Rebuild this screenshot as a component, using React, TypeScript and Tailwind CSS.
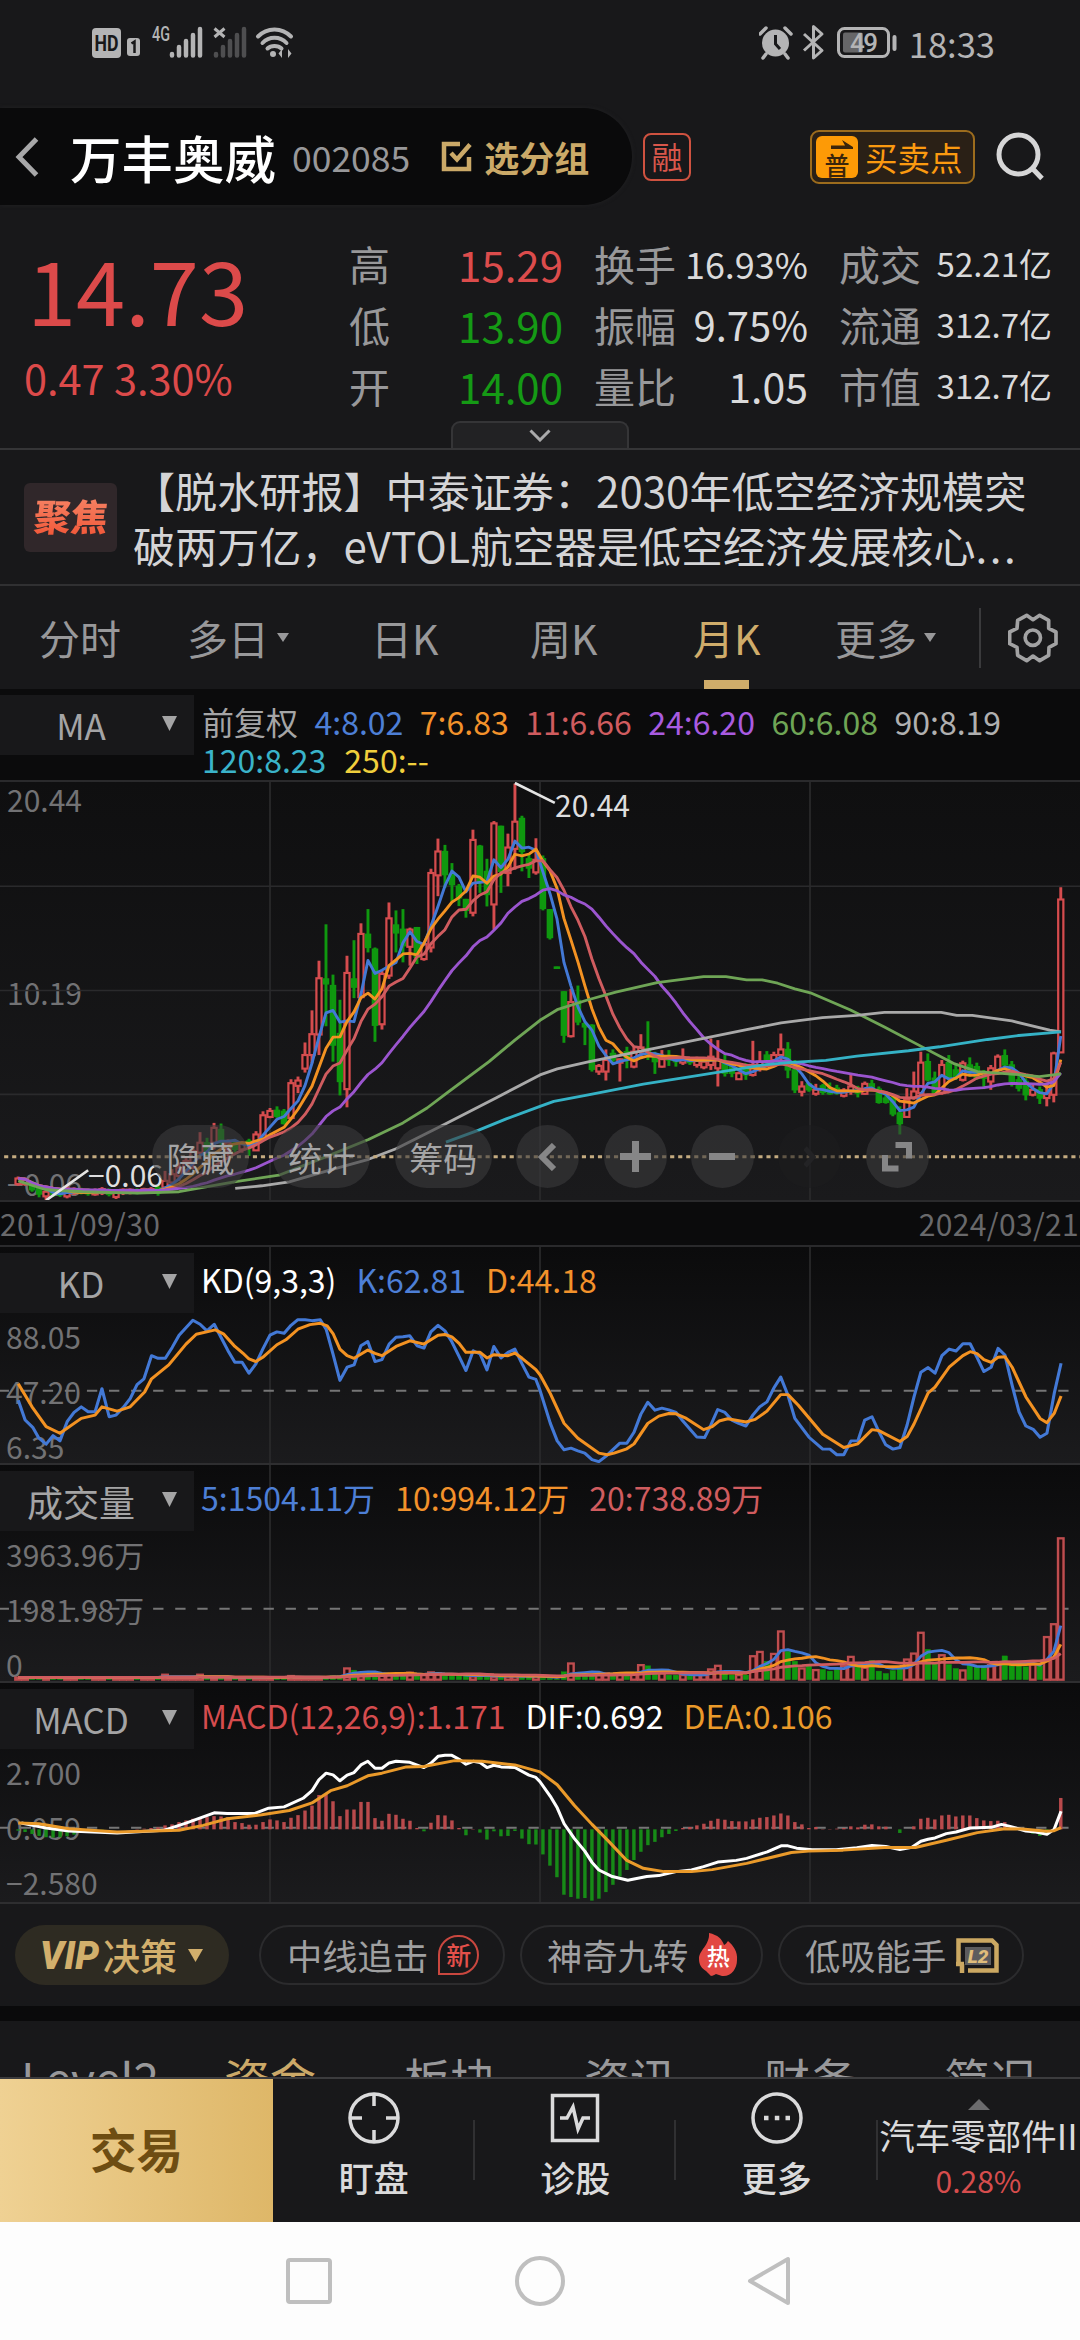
import React from "react";

type Pt = [number, number];

const X0 = 52.5;
const STEP = 20.32;
const xAt = (i: number) => X0 + STEP * i;

const BLUE = "#4379d6";
const ORANGE = "#f39222";
const ROSE = "#d05c5f";
const RED = "#d54c4e";
const GREEN = "#0f980f";

// Monthly candles: direction, high, body top, body bottom, low (chart units).
const CANDLES = `
R1222,1228,1245,1250 R1225,1232,1245,1250 G1235,1240,1262,1268 G1250,1258,1275,1285 R1262,1268,1282,1293
G1258,1264,1276,1284 G1255,1262,1278,1284 R1250,1262,1282,1288 R1255,1262,1272,1278 G1256,1262,1272,1276
G1258,1264,1274,1280 R1258,1264,1276,1280 R1254,1260,1272,1278 G1258,1262,1276,1282 R1262,1268,1284,1290
R1258,1262,1272,1278 R1258,1262,1270,1276 G1258,1262,1270,1276 R1256,1260,1268,1272 R1254,1260,1268,1272
G1250,1256,1272,1280 R1205,1235,1255,1262 R1200,1215,1240,1250 R1180,1195,1220,1235 R1160,1175,1205,1215
R1130,1145,1180,1200 R1088,1120,1150,1170 G1105,1120,1150,1160 R1060,1075,1120,1140 G1062,1080,1115,1130
R1110,1120,1140,1160 G1110,1120,1140,1150 R1115,1120,1140,1150 G1108,1115,1135,1160 R1085,1095,1143,1145
R1025,1037,1108,1110 R1015,1024,1042,1046 G1010,1022,1040,1045 G1018,1025,1062,1065 R928,940,1045,1050
R920,932,948,970 R817,855,896,908 R720,792,855,880 R570,623,793,855 G460,625,640,768
G612,645,825,875 G688,790,935,977 R555,607,958,1013 G508,625,650,683 R457,489,680,684
G414,490,530,545 G530,535,765,815 R600,610,762,778 R394,442,615,625 G418,462,486,545
G414,475,525,575 R470,476,528,585 G468,470,560,580 R515,520,565,570 R292,305,530,545
R201,240,312,375 G220,240,310,350 G275,310,340,392 G338,345,380,405 G383,385,418,440
R174,205,425,436 G220,224,330,365 G262,300,370,406 R148,155,400,476 G162,164,300,365
R186,228,305,345 R35,150,232,295 G132,140,240,300 G250,262,290,320 R200,265,303,310
G252,262,412,418 G414,416,500,506 G588,589,593,593 G662,664,795,818 R655,695,798,802
G645,690,755,765 G755,760,770,825 G762,765,898,905 R882,888,905,915 R838,870,905,932
G838,850,870,880 R865,868,878,935 G830,845,870,895 R830,845,890,895 R792,832,845,865
G753,835,850,870 G845,855,875,912 R840,866,890,893 G840,858,870,888 G855,865,875,890
R835,865,878,885 G862,868,878,885 R860,870,885,893 R868,875,892,898 R805,860,885,900
R810,870,895,950 G848,880,910,920 G885,890,910,922 R905,910,928,930 G880,890,915,930
R812,885,915,920 R843,875,890,905 G843,855,875,885 R845,855,870,875 R790,838,855,875
G816,838,900,925 G870,900,960,970 R934,950,966,980 G938,942,960,966 R942,960,972,978
G942,948,968,975 G938,955,972,975 G945,955,970,975 R955,962,978,983 R912,950,965,975
G948,955,970,983 R935,942,972,975 G930,942,955,965 G950,958,998,1002 G970,985,998,1002
G975,985,1033,1040 G1010,1030,1062,1095 R955,990,1042,1045 R905,965,985,990 R845,878,970,975
G850,875,930,935 G905,925,970,975 R870,885,970,975 G855,878,925,930 G880,900,920,930
R872,880,930,935 G862,885,905,920 G878,890,925,930 G900,905,925,958 R885,895,935,960
R853,860,900,905 G838,857,885,895 G873,885,935,950 G910,930,955,965 G925,935,975,992
R945,960,975,980 G950,960,985,1003 R940,970,985,1010 R845,850,975,998 R348,385,847,847
`
  .trim()
  .split(/\s+/)
  .map((s) => {
    const [h, t, b, l] = s.slice(1).split(",").map(Number);
    return { up: s[0] === "R", h, t, b, l };
  });

const CLOSES = CANDLES.map((c) => (c.up ? c.t : c.b));

const VOLUME = [
  ...Array.from({ length: 47 }, (_, i) => (i === 21 || i === 26 ? 349 : i === 39 ? 353 : i > 44 ? 352 : 358)),
  330, 335, 345, 347, 350, 352, 348, 352, 350, 343, 350, 350, 342, 345, 352, 353, 352, 352, 354, 354, 352, 355, 355,
  354, 354, 355, 355, 352, 360, 360, 362, 340, 315, 350, 350, 352, 345, 345, 350, 345, 350, 345, 320, 322, 345, 345,
  350, 350, 350, 352, 350, 350, 333, 322, 345, 350, 350, 350, 293, 280, 308, 286, 218, 278, 308, 330, 318, 335, 333,
  338, 330, 322, 295, 322, 328, 305, 338, 345, 336, 325, 303, 285, 222, 272, 312, 290, 318, 330, 336, 318, 322, 322,
  320, 318, 292, 320, 320, 325, 318, 322, 235, 196, -64,
];

const MACD_BARS = [
  816, 820, 826, 832, 836, 837, 836, 833, 828, 822, 818, 815, 813, 812, 812, 812, 812, 811, 810, 808, 806, 800, 797,
  790, 785, 780, 778, 775, 772, 773, 775, 790, 793, 798, 798, 790, 782, 785, 790, 777, 769, 755, 740, 708, 705, 727,
  772, 752, 752, 729, 729, 778, 786, 765, 768, 780, 786, 808, 818, 792, 769, 770, 785, 808, 830, 811, 822, 843, 818,
  833, 832, 817, 840, 857, 858, 888, 922, 957, 1010, 1017, 1022, 1020, 1028, 1022, 1002, 980, 955, 935, 905, 880,
  860, 850, 836, 826, 817, 808, 805, 800, 795, 786, 780, 783, 787, 788, 788, 782, 777, 775, 770, 764, 770, 790, 797,
  808, 805, 811, 811, 810, 808, 803, 806, 798, 797, 803, 804, 812, 823, 812, 803, 780, 777, 782, 770, 768, 773, 770,
  770, 778, 785, 787, 786, 790, 805, 812, 818, 825, 832, 828, 812, 717,
];

const average = (v: number[], n: number): Pt[] =>
  v.map((_, i) => {
    const w = v.slice(Math.max(0, i - n + 1), i + 1);
    return [xAt(i), w.reduce((a, b) => a + b, 0) / w.length];
  });

const parse = (s: string): Pt[] =>
  s
    .trim()
    .split(/\s+/)
    .map((p) => p.split(",").map(Number) as Pt);

const MA60 = parse(
  "53,1235 134,1262 240,1268 400,1272 520,1268 680,1238 810,1218 940,1165 1070,1110 1170,1060 1240,1015 1300,968 1420,875 1495,810 1568,750 1618,718 1708,688 1788,665 1908,636 2043,618 2108,618 2168,628 2213,628 2258,638 2308,655 2353,667 2468,718 2568,770 2668,825 2768,880 2838,905 2968,915 3018,920 3081,912",
);
const MA90 = parse(
  "683,1258 760,1250 840,1238 960,1202 1070,1170 1150,1138 1290,1065 1440,985 1568,915 1618,897 1708,876 1868,842 2043,805 2168,778 2268,758 2388,742 2488,735 2568,726 2648,726 2733,726 2778,735 2823,735 2938,752 3048,780 3081,785",
);
const MA120 = parse(
  "1295,1118 1390,1082 1470,1048 1568,1010 1608,995 1708,975 1868,943 2038,915 2218,885 2288,878 2398,871 2488,858 2638,842 2728,830 2868,808 2958,796 3081,785",
);

const K_LINE = parse(
  "53,485 73,545 95,567 113,600 134,618 154,592 174,608 195,550 215,522 236,505 256,520 276,520 296,450 317,535 337,530 357,508 378,480 398,438 418,420 440,350 459,358 480,358 500,325 520,288 560,243 581,255 601,275 622,255 642,295 662,335 682,370 703,370 723,403 743,375 763,330 784,288 804,278 825,282 845,258 865,241 886,241 906,244 930,241 947,270 967,345 987,425 1008,385 1028,378 1048,320 1068,307 1089,368 1109,362 1130,315 1150,294 1170,293 1190,290 1211,320 1231,327 1251,278 1272,258 1292,275 1312,308 1333,352 1353,395 1374,335 1394,345 1414,393 1434,322 1455,357 1475,340 1495,330 1516,375 1536,415 1556,422 1568,455 1598,555 1618,608 1638,635 1658,630 1678,638 1698,645 1719,665 1739,671 1759,655 1800,615 1820,615 1841,582 1861,527 1881,491 1902,515 1922,509 1942,514 1963,522 1983,548 2023,596 2046,598 2064,560 2084,513 2105,522 2125,545 2145,555 2166,563 2186,530 2206,505 2227,490 2247,448 2267,415 2288,470 2308,540 2349,597 2389,633 2410,633 2430,650 2450,650 2471,608 2491,608 2511,545 2532,535 2552,580 2572,620 2593,633 2613,628 2634,560 2654,475 2674,400 2695,386 2715,403 2735,350 2756,330 2776,336 2796,314 2817,314 2837,355 2857,398 2878,385 2898,328 2918,348 2939,440 2959,520 2979,563 3000,573 3020,597 3040,585 3061,465 3081,373",
);
const D_LINE = parse(
  "53,435 93,505 134,565 174,585 236,540 276,530 296,505 340,518 378,505 420,460 440,420 490,378 540,315 570,285 625,272 650,285 682,322 705,342 723,360 743,368 763,355 804,317 830,302 865,270 900,256 930,252 950,260 967,283 987,330 1008,350 1028,358 1068,333 1089,343 1109,350 1150,322 1190,305 1231,315 1272,288 1292,286 1312,293 1333,313 1353,340 1394,340 1414,357 1434,347 1475,350 1495,342 1516,358 1556,392 1568,408 1598,465 1638,555 1678,600 1739,645 1763,650 1783,645 1820,632 1841,617 1881,555 1913,533 1942,525 1963,526 1993,540 2043,574 2068,565 2088,548 2113,541 2166,551 2193,543 2227,518 2267,468 2288,468 2318,500 2389,588 2450,628 2491,617 2532,574 2552,577 2613,610 2634,595 2654,557 2695,463 2715,445 2756,385 2796,350 2817,338 2837,344 2857,362 2878,370 2898,355 2918,353 2939,385 2979,475 3020,540 3040,553 3061,525 3081,472",
);
const DIF_LINE = parse(
  "62,793 134,808 200,817 340,823 475,815 540,793 580,778 622,762 660,764 740,764 780,748 825,744 880,718 906,695 926,662 947,642 967,647 987,665 1008,648 1028,640 1048,617 1068,606 1089,627 1109,627 1130,611 1150,606 1190,609 1231,625 1251,612 1272,591 1292,588 1312,588 1333,600 1353,615 1374,606 1394,610 1414,625 1434,618 1455,623 1495,625 1536,648 1556,655 1568,668 1598,712 1618,747 1638,795 1668,840 1698,878 1719,912 1739,935 1778,955 1823,966 1878,955 1913,952 1963,940 2008,935 2043,925 2084,911 2138,906 2168,900 2228,880 2268,862 2288,862 2313,869 2358,874 2428,874 2488,868 2532,861 2572,864 2613,873 2648,866 2674,848 2695,842 2715,838 2748,825 2776,820 2817,808 2878,806 2908,797 2933,803 2979,817 3008,820 3040,827 3061,812 3081,757",
);
const DEA_LINE = parse(
  "53,793 113,795 200,810 340,820 520,815 590,800 660,780 760,768 840,755 906,732 960,695 1008,680 1068,650 1109,642 1180,623 1231,622 1320,604 1400,606 1495,617 1568,638 1618,677 1668,740 1719,797 1769,850 1820,906 1868,930 1928,940 2008,940 2068,934 2168,915 2298,882 2348,878 2448,875 2568,867 2658,867 2748,845 2838,822 2918,810 2968,811 3040,818 3061,816 3081,807",
);

function Line({ pts, color, w = 8.5 }: { pts: Pt[]; color: string; w?: number }) {
  return (
    <polyline
      points={pts.map((p) => p[0].toFixed(1) + "," + p[1].toFixed(1)).join(" ")}
      fill="none"
      stroke={color}
      strokeWidth={w}
      strokeLinejoin="round"
    />
  );
}

function Grid({ top, bottom, rows = [] }: { top: number; bottom: number; rows?: number[] }) {
  return (
    <g stroke="#2a2a2c" strokeWidth="5">
      {[784, 1568, 2352].map((x) => (
        <line key={x} x1={x} x2={x} y1={top} y2={bottom} />
      ))}
      {rows.map((y) => (
        <line key={y} x1="0" x2="3136" y1={y} y2={y} />
      ))}
    </g>
  );
}

function Dashes({ y }: { y: number }) {
  return (
    <line x1="0" x2="3136" y1={y} y2={y} stroke="#757576" strokeWidth="6" strokeDasharray="30 34.1" strokeDashoffset="4" />
  );
}

const CANVAS = "absolute inset-0 w-full h-full";

function PriceChart() {
  return (
    <svg className={CANVAS} viewBox="0 30 3136 1263" preserveAspectRatio="none">
      <Grid top={30} bottom={1293} rows={[345, 660, 974]} />
      {CANDLES.map((c, i) => {
        const x = xAt(i);
        const col = c.up ? RED : GREEN;
        return (
          <g key={i}>
            <line x1={x} x2={x} y1={c.h} y2={c.l} stroke={col} strokeWidth="8.5" />
            <rect
              x={x - 7.5}
              y={c.t}
              width="15"
              height={Math.max(1, c.b - c.t)}
              fill={c.up ? "#160d0e" : col}
              stroke={col}
              strokeWidth={c.up ? 6.5 : 4}
            />
          </g>
        );
      })}
      <Line pts={average(CLOSES, 4)} color={BLUE} />
      <Line pts={average(CLOSES, 7)} color={ORANGE} />
      <Line pts={average(CLOSES, 11)} color={ROSE} />
      <Line pts={average(CLOSES, 24)} color="#9b55cf" />
      <Line pts={MA60} color="#6fa556" />
      <Line pts={MA90} color="#a9a9a9" />
      <Line pts={MA120} color="#35b2c6" />
      <line x1="12" x2="3136" y1="1162" y2="1162" stroke="#c4ab80" strokeWidth="9" strokeDasharray="12 11.3" />
      <path d="M1495 33 L1611 93 M134 1294 L256 1203" stroke="#e4e4e4" strokeWidth="8" fill="none" />
    </svg>
  );
}

function KdChart() {
  return (
    <svg className={CANVAS} viewBox="0 21 3136 654" preserveAspectRatio="none">
      <Grid top={21} bottom={675} />
      <Dashes y={456} />
      <Line pts={K_LINE} color={BLUE} w={9} />
      <Line pts={D_LINE} color={ORANGE} w={9} />
    </svg>
  );
}

function VolumeChart() {
  return (
    <svg className={CANVAS} viewBox="0 -285 3136 654" preserveAspectRatio="none">
      <Grid top={-285} bottom={369} />
      <Dashes y={150} />
      {VOLUME.map((v, i) => {
        const up = CANDLES[i].up;
        return (
          <rect
            key={i}
            x={xAt(i) - 8}
            y={v + 1}
            width="16"
            height={364 - v}
            fill={up ? "#260e0e" : GREEN}
            stroke={up ? "#bf4d4f" : GREEN}
            strokeWidth={up ? 7 : 1}
          />
        );
      })}
      <Line pts={average(VOLUME, 5)} color={BLUE} />
      <Line pts={average(VOLUME, 10)} color={ORANGE} />
      <Line pts={average(VOLUME, 20)} color={ROSE} />
    </svg>
  );
}

function MacdChart() {
  return (
    <svg className={CANVAS} viewBox="0 369 3136 663" preserveAspectRatio="none">
      <Grid top={369} bottom={1032} />
      <Dashes y={807} />
      {MACD_BARS.map((v, i) => (
        <line
          key={i}
          x1={xAt(i)}
          x2={xAt(i)}
          y1="812"
          y2={v}
          stroke={v > 812 ? "#178a17" : "#b94a4c"}
          strokeWidth="10"
        />
      ))}
      <Line pts={DIF_LINE} color="#ffffff" w={9} />
      <Line pts={DEA_LINE} color="#ea9a2a" w={9} />
    </svg>
  );
}

function Tri({ className }: { className: string }) {
  return (
    <svg className={className} viewBox="0 0 10 10" preserveAspectRatio="none">
      <path d="M0 0H10L5 10Z" fill="currentColor" />
    </svg>
  );
}

function Selector({ label, size = "text-[35px]" }: { label: string; size?: string }) {
  return (
    <div className="flex h-[60px] w-[194px] shrink-0 items-center bg-[#18181a] text-[#a4a4a5]">
      <span className={`w-[162px] text-center leading-[58px] ${size}`}>{label}</span>
      <Tri className="mb-1 h-[15px] w-[15px]" />
    </div>
  );
}

function Indicator({
  label,
  size,
  values,
  axis,
  height,
  children,
}: {
  label: string;
  size?: string;
  values: { text: string; cls: string }[];
  axis: string[];
  height: string;
  children: React.ReactNode;
}) {
  return (
    <section className={`relative border-b-2 border-[#2e2e30] bg-linear-to-b from-[#0b0b0c] to-[#1b1b1d] pt-[6px] ${height}`}>
      {children}
      <div className="relative flex">
        <Selector label={label} size={size} />
        <div className="flex gap-[20px] pl-[7px] text-[32px] leading-[53px]">
          {values.map((v) => (
            <span key={v.text} className={v.cls}>
              {v.text}
            </span>
          ))}
        </div>
      </div>
      <div className="-mt-[4px] flex flex-col pl-[6px] text-[30px] leading-[55px] text-[#727274]">
        {axis.map((a) => (
          <span key={a}>{a}</span>
        ))}
      </div>
    </section>
  );
}

function StatusBar() {
  return (
    <div className="flex h-[85px] items-center px-[92px] text-[#b4b4b5]">
      <svg className="h-[36px] w-[202px]" viewBox="92 25 202 36">
        <rect x="92" y="28" width="29" height="30" rx="4" fill="currentColor" />
        <text x="106.500" y="51" fontSize="22" fontWeight="700" textAnchor="middle" textLength="24" lengthAdjust="spacingAndGlyphs" fill="#18181a" fontFamily="Roboto, sans-serif">
          HD
        </text>
        <rect x="127" y="38" width="13" height="18" rx="3" fill="currentColor" />
        <path d="M131.500 43.500L134.500 41.500V53" stroke="#18181a" strokeWidth="2.500" fill="none" />
        <text x="152" y="41" fontSize="20" fontWeight="500" textLength="18" lengthAdjust="spacingAndGlyphs" fill="currentColor" fontFamily="Roboto, sans-serif">
          4G
        </text>
        <g stroke="currentColor" strokeWidth="4.500" strokeLinecap="round">
          <path d="M172 54V55.500M179 47V55.500M186 41V55.500M193 35V55.500M200 29V55.500" />
          <path d="M216 54V55.500M223 47V55.500M230 41V55.500M237 35V55.500M244 29V55.500" opacity="0.35" />
        </g>
        <path d="M214.500 28.500L224.500 37M224.500 28.500L214.500 37" stroke="currentColor" strokeWidth="3" />
        <g stroke="currentColor" strokeWidth="4" fill="none" strokeLinecap="round">
          <path d="M258 36.500C267 27 282 27 291 36.500M262.500 43C269 36 280 36 286.500 43M267.500 48.500C271 45 278 45 281.500 48.500" />
        </g>
        <circle cx="273" cy="54" r="3" fill="currentColor" />
        <path d="M282 49L278.500 53.500L282 58ZM288 49L291.500 53.500L288 58Z" fill="currentColor" />
      </svg>
      <svg className="ml-auto h-[36px] w-[140px]" viewBox="757 25 140 36">
        <circle cx="773.500" cy="43" r="13.500" fill="currentColor" />
        <path d="M758 34L764 28M789 34L783 28M764 54L761 58M783 54L786 58" stroke="currentColor" strokeWidth="3.500" strokeLinecap="round" />
        <path d="M773.500 35V44L778 49" stroke="#18181a" strokeWidth="3" fill="none" />
        <path d="M802 34L820 50.500L811.500 58V26.500L820 34L802 50.500" stroke="currentColor" strokeWidth="3" fill="none" strokeLinejoin="round" />
        <rect x="836.500" y="28.500" width="50" height="28" rx="6" stroke="currentColor" strokeWidth="3" fill="none" />
        <rect x="841" y="32.500" width="20" height="20" rx="2" fill="currentColor" opacity="0.5" />
        <rect x="890.500" y="35" width="4" height="16" rx="2" fill="currentColor" />
        <text x="862" y="52" fontSize="26" fontWeight="500" textAnchor="middle" textLength="28" fill="currentColor" fontFamily="Roboto, sans-serif">
          49
        </text>
      </svg>
      <span className="-mr-[7px] ml-[10px] text-[34.500px] leading-[40px]">18:33</span>
    </div>
  );
}

function Header() {
  return (
    <header className="mt-[23px] flex h-[97px] items-center">
      <div className="flex h-full w-[632px] items-center rounded-r-full bg-[#0a0a0b] pl-[15px] shadow-[0_0_4px_#222224]">
        <svg className="h-[42px] w-[24px] text-[#a8a8a9]" viewBox="0 0 24 42" fill="none" stroke="currentColor" strokeWidth="5">
          <path d="M21.500 3L4 21L21.500 39" />
        </svg>
        <h1 className="ml-[31px] text-[51.500px] leading-[95px] font-medium text-white">万丰奥威</h1>
        <span className="ml-[16px] text-[35.500px] leading-[95px] text-[#98989a]">002085</span>
        <svg className="ml-[31px] h-[31px] w-[31px] text-[#cba968]" viewBox="0 0 31 31" fill="none" stroke="currentColor" strokeWidth="4.500">
          <path d="M19 3H3V28H28V16M10 12L16 18.500L29 3.500" />
        </svg>
        <span className="ml-[12px] text-[35px] leading-[95px] font-bold text-[#cba968]">选分组</span>
      </div>
      <span className="ml-[11px] h-[48px] w-[48px] rounded-[8px] border-[2.500px] border-[#cf5240] text-center text-[31px] leading-[41px] text-[#d9574b]">
        融
      </span>
      <div className="ml-auto flex h-[54px] w-[165px] items-center rounded-[9px] border-[2.500px] border-[#9c6c1d] bg-[#2a2016] pl-[4px]">
        <span className="relative flex h-[42px] w-[42px] items-end justify-center rounded-[6px] bg-[#fd9a06] text-[25px] leading-[27px] font-medium text-[#3a250b]">
          <svg className="absolute top-[4px] left-[15px] h-[9px] w-[22px]" viewBox="0 0 22 9">
            <path d="M0 5.500H14L11 0L22 7V9H0Z" fill="#3a250b" />
          </svg>
          普
        </span>
        <span className="ml-[7px] text-[32.500px] leading-[46px] text-[#fb9a10]">买卖点</span>
      </div>
      <svg className="mr-[34px] ml-[21px] h-[50px] w-[50px] text-[#d6d6d7]" viewBox="0 0 50 50" fill="none" stroke="currentColor" strokeWidth="5">
        <circle cx="22.500" cy="22.500" r="19.500" />
        <path d="M36 36L46 46.500" />
      </svg>
    </header>
  );
}

const STATS: [string, string, string, string, string, string, string][] = [
  ["高", "15.29", "text-[#dc4c4c]", "换手", "16.93%", "text-[36px]", "成交|52.21亿"],
  ["低", "13.90", "text-[#159a15]", "振幅", "9.75%", "text-[40px]", "流通|312.7亿"],
  ["开", "14.00", "text-[#159a15]", "量比", "1.05", "text-[41px]", "市值|312.7亿"],
];

function Quote() {
  return (
    <section className="relative h-[245px] border-b-2 border-[#353537]">
      <div className="flex pt-[28px]">
        <div className="w-[349px] text-[#dc4a4a]">
          <div className="pl-[27px] text-[88.500px] leading-[108px]">14.73</div>
          <div className="pt-[6px] pl-[24px] text-[41.500px] leading-[60px]">0.47 3.30%</div>
        </div>
        <div className="flex flex-col text-[41px] leading-[61px] text-[#98989a]">
          {STATS.map(([a, av, ac, b, bv, bs, c]) => (
            <div key={a} className="flex h-[61px]">
              <span className="w-[60px]">{a}</span>
              <span className={`w-[154px] text-right text-[42px] ${ac}`}>{av}</span>
              <span className="ml-[31px] w-[82px] shrink-0">{b}</span>
              <span className={`w-[132px] text-right text-[#dadadb] ${bs}`}>{bv}</span>
              <span className="ml-[31px] w-[82px]">{c.split("|")[0]}</span>
              <span className="w-[131px] text-right text-[33px] text-[#dadadb]">{c.split("|")[1]}</span>
            </div>
          ))}
        </div>
      </div>
      <div className="absolute bottom-0 left-[451px] flex h-[27px] w-[178px] items-center justify-center rounded-t-[9px] border-x-2 border-t-2 border-[#353537] bg-[#222224]">
        <svg className="h-[13px] w-[22px]" viewBox="0 0 22 13" fill="none" stroke="#aaaaab" strokeWidth="3">
          <path d="M1.500 1.500L11 11L20.500 1.500" />
        </svg>
      </div>
    </section>
  );
}

function News() {
  return (
    <section className="flex h-[136px] items-center border-b-2 border-[#303032]">
      <div className="ml-[24px] flex h-[69px] w-[93px] items-center justify-center rounded-[6px] bg-[#30272a]">
        <span className="-skew-x-6 bg-linear-to-b from-[#f58a6c] to-[#f0492a] bg-clip-text pb-[5px] text-[37px] leading-[54px] font-black text-transparent">
          聚焦
        </span>
      </div>
      <p className="ml-[16px] text-[42.100px] leading-[55px] whitespace-nowrap text-[#d4d4d6]">
        【脱水研报】中泰证券：2030年低空经济规模突
        <br />
        破两万亿，<span className="tracking-[0.400px]">eVTOL</span>航空器是低空经济发展核心
        <span className="tracking-[2.500px]">...</span>
      </p>
    </section>
  );
}

function PeriodTabs() {
  return (
    <nav className="relative flex h-[103px] items-center text-[41px] leading-[103px] text-[#98989a]">
      <span className="ml-[39px] w-[148px]">分时</span>
      <span className="flex w-[184px] items-center">
        多日
        <Tri className="ml-[8px] h-[9px] w-[12px]" />
      </span>
      <span className="w-[159px]">日K</span>
      <span className="w-[163px]">周K</span>
      <span className="relative w-[142px] text-[#cfac6a]">
        月K
        <i className="absolute bottom-0 left-[11px] h-[9px] w-[45px] bg-[#cfac6a]" />
      </span>
      <span className="flex w-[144px] items-center">
        更多
        <Tri className="ml-[7px] h-[9px] w-[12px]" />
      </span>
      <span className="h-[60px] w-[2px] bg-[#3a3a3c]" />
      <svg className="ml-[27px] h-[50px] w-[50px]" viewBox="24 38 150 150" fill="none" stroke="#a2a2a3" strokeWidth="11" strokeLinejoin="round">
        <path d="M80 45L99 58L119 45L146 60L146 84L168 95V130L147 141L146 165L119 181L99 167L80 181L53 165L51 141L29 130V95L51 84L53 60Z" />
        <circle cx="98.500" cy="112" r="23" />
      </svg>
    </nav>
  );
}

const PILL = "flex h-[63px] w-[97px] items-center justify-center rounded-full bg-[#3b3b3c]/60 pt-[2px] text-[34px] leading-[61px] text-[#a5a5a6]";
const DISC = "flex h-[63px] w-[63px] items-center justify-center rounded-full bg-[#3b3b3c]/60";

function PricePanel() {
  return (
    <section className="bg-[#0b0b0c] pt-[6px]">
      <div className="flex h-[85px]">
        <Selector label="MA" />
        <div className="pl-[8px] text-[32px] leading-[38px]">
          <div className="flex gap-[16.500px] pt-[7px]">
            <span className="text-[#a5a5a6]">前复权</span>
            <span className="text-[#4d7fd6]">4:8.02</span>
            <span className="text-[#f3922b]">7:6.83</span>
            <span className="text-[#d05c5f]">11:6.66</span>
            <span className="text-[#a95be0]">24:6.20</span>
            <span className="text-[#6fa556]">60:6.08</span>
            <span className="text-[#b0b0b0]">90:8.19</span>
          </div>
          <div className="flex gap-[18px]">
            <span className="text-[#3ab3c9]">120:8.23</span>
            <span className="text-[#f0cf3c]">250:--</span>
          </div>
        </div>
      </div>
      <div className="relative h-[422px] border-y-2 border-[#2a2a2c] bg-linear-to-b from-[#0f0f10] to-[#1a1a1c] text-[30px] leading-[34px] text-[#727274]">
        <div className="flex h-full flex-col pl-[7px]">
          <span>20.44</span>
          <span className="mt-[159px]">10.19</span>
          <span className="mt-[157px]">−0.06</span>
        </div>
        <PriceChart />
        <span className="absolute top-[5px] left-[555px] text-[#dededf]">20.44</span>
        <span className="absolute top-[375px] left-[88px] text-[#dededf]">−0.06</span>
        <div className="absolute top-[343px] left-[152px] flex gap-[24.400px]">
          <span className={PILL}>隐藏</span>
          <span className={PILL}>统计</span>
          <span className={PILL}>筹码</span>
          <span className={DISC}>
            <svg className="h-[28px] w-[20px]" viewBox="0 0 20 28" fill="none" stroke="#868687" strokeWidth="6">
              <path d="M16 2L4 14L16 26" />
            </svg>
          </span>
          <span className={DISC}>
            <svg className="h-[31px] w-[31px]" viewBox="0 0 31 31" stroke="#868687" strokeWidth="7">
              <path d="M0 15.500H31M15.500 0V31" />
            </svg>
          </span>
          <span className={DISC}>
            <i className="h-[7px] w-[26px] bg-[#868687]" />
          </span>
          <span className="flex h-[63px] w-[63px] items-center justify-center rounded-full bg-[#1d1d1e]/60">
            <svg className="h-[22px] w-[12px]" viewBox="0 0 12 22" fill="none" stroke="#232325" strokeWidth="5">
              <path d="M1 2L9 11L1 20" />
            </svg>
          </span>
          <span className={DISC}>
            <svg className="h-[30px] w-[30px]" viewBox="0 0 30 30" fill="none" stroke="#868687" strokeWidth="6">
              <path d="M13.500 3H27V16.500M3 13V26.500H16.500" />
            </svg>
          </span>
        </div>
      </div>
      <div className="flex h-[45px] justify-between border-b-2 border-[#2a2a2c] pr-[1px] text-[30px] leading-[43px] tracking-[0.350px] text-[#69696b]">
        <span>2011/09/30</span>
        <span>2024/03/21</span>
      </div>
    </section>
  );
}

const CHIP = "flex h-[60px] items-center rounded-full border-2 border-[#2b2b2d] text-[35.300px] leading-[54px] text-[#a0a0a1]";

function Strategies() {
  return (
    <div className="flex h-[102px] items-start pt-[21px] pl-[15px]">
      <div className="flex h-[60px] w-[214px] items-center rounded-full bg-[#2e2b22] pl-[24px] text-[#d2af6c]">
        <svg className="h-[34px] w-[62px] overflow-visible" viewBox="0 0 62 34">
          <text x="1" y="31" fontSize="38" fontWeight="900" fontStyle="italic" fill="currentColor" textLength="59" lengthAdjust="spacingAndGlyphs" fontFamily="Roboto, sans-serif">
            VIP
          </text>
        </svg>
        <span className="ml-[2px] text-[37px] leading-[58px] font-medium">决策</span>
        <Tri className="ml-[11px] h-[13px] w-[15px]" />
      </div>
      <div className={`ml-[30px] w-[246px] pl-[26px] ${CHIP}`}>
        中线追击
        <span className="ml-[10px] h-[40px] w-[41px] rounded-full rounded-bl-none border-2 border-[#c9473f] text-center text-[25px] leading-[34px] font-medium text-[#e2504a]">
          新
        </span>
      </div>
      <div className={`ml-[15px] w-[243px] pl-[25px] ${CHIP}`}>
        神奇九转
        <span className="relative ml-[10px] flex h-[44px] w-[40px] justify-center text-[23px] leading-[44px] font-medium text-white">
          <svg className="absolute inset-0 h-full w-full" viewBox="0 0 40 44">
            <path d="M11 0C20 2 24 6 26 12C28 11 29 9.500 30 8C35 12 40 19 39 27C39 36 33 44 24 43L18 41C17 42 13 43 13 43L8 38C3 35 1 31 1 26C1 17 12 12 11 0Z" fill="#e24843" />
          </svg>
          <span className="relative">热</span>
        </span>
      </div>
      <div className={`ml-[15px] w-[246px] pl-[25px] ${CHIP}`}>
        低吸能手
        <svg className="ml-[10px] h-[35px] w-[43px]" viewBox="0 0 43 35">
          <path d="M2.500 25V2.500H36L40.500 7V32.500H12M0 26H8M6 26V35" fill="none" stroke="#cba862" strokeWidth="4.500" />
          <rect x="9" y="9" width="26" height="18" fill="#5c5c5e" />
          <text x="22" y="24.500" fontSize="19" fontWeight="900" fontStyle="italic" textAnchor="middle" fill="#e0bd7b" fontFamily="Roboto, sans-serif">
            L2
          </text>
        </svg>
      </div>
    </div>
  );
}

function DetailTabs() {
  return (
    <div className="grid h-[56px] grid-cols-6 overflow-hidden text-center text-[46px] leading-[113px] text-[#98989a]">
      <span>Level2</span>
      <span className="text-[#cba968]">资金</span>
      <span>板块</span>
      <span>资讯</span>
      <span>财务</span>
      <span>简况</span>
    </div>
  );
}

function Action({ label, divider = true, children }: { label: string; divider?: boolean; children: React.ReactNode }) {
  return (
    <div className="relative flex w-[201.500px] flex-col items-center pt-[12px]">
      <svg className="h-[54px] w-[54px]" viewBox="0 0 54 54" fill="none" stroke="#dadadb" strokeWidth="3.500">
        {children}
      </svg>
      <span className="mt-[6px] text-[35px] leading-[52px] font-medium text-[#dadadb]">{label}</span>
      {divider && <i className="absolute top-[41px] right-0 h-[60px] w-[2px] bg-[#303032]" />}
    </div>
  );
}

function BottomBar() {
  return (
    <div className="flex h-[145px] border-t-2 border-[#3c3c3e]">
      <div className="w-[273px] bg-linear-to-r from-[#efd193] to-[#deb768] text-center text-[46.500px] leading-[138px] font-bold text-[#6e4d12]">
        交易
      </div>
      <Action label="盯盘">
        <circle cx="27" cy="27" r="24" />
        <path d="M27 3V15M27 39V51M3 27H15M39 27H51" />
      </Action>
      <Action label="诊股">
        <rect x="4.500" y="4.500" width="45" height="45" />
        <path d="M12 27H19L25 16L30 38L35 27H42" />
      </Action>
      <Action label="更多">
        <circle cx="27" cy="27" r="24" />
        <path d="M14 27H18.500M24.800 27H29.300M35.500 27H40" strokeWidth="4.500" />
      </Action>
      <div className="flex w-[202px] flex-col items-center pt-[20px] whitespace-nowrap">
        <svg className="h-[11px] w-[22px]" viewBox="0 0 22 11">
          <path d="M11 0L22 11H0Z" fill="#6b6b6d" />
        </svg>
        <span className="text-[35.500px] leading-[50px] text-[#dadadb]">汽车零部件II</span>
        <span className="text-[30px] leading-[40px] text-[#d64d4d]">0.28%</span>
      </div>
    </div>
  );
}

function SystemNav() {
  return (
    <div className="flex h-[118px] items-center justify-center gap-[178px] bg-[#fdfdfd] text-[#bfbfbf]">
      <svg className="-ml-[3px] h-[50px] w-[50px]" viewBox="0 0 50 50" fill="none" stroke="currentColor" strokeWidth="4">
        <rect x="4" y="4" width="42" height="42" rx="2" />
      </svg>
      <svg className="ml-[3px] h-[50px] w-[50px]" viewBox="0 0 50 50" fill="none" stroke="currentColor" strokeWidth="4">
        <circle cx="25" cy="25" r="23" />
      </svg>
      <svg className="h-[50px] w-[50px]" viewBox="0 0 50 50" fill="none" stroke="currentColor" strokeWidth="4" strokeLinejoin="round">
        <path d="M45 3V47L7 25Z" />
      </svg>
    </div>
  );
}

export default function App() {
  return (
    <div className="h-[2340px] w-[1080px] overflow-hidden bg-[#18181a] font-['Noto_Sans_CJK_SC',sans-serif]">
      <StatusBar />
      <Header />
      <Quote />
      <News />
      <PeriodTabs />
      <PricePanel />
      <Indicator
        label="KD"
        height="h-[218px]"
        values={[
          { text: "KD(9,3,3)", cls: "text-white" },
          { text: "K:62.81", cls: "text-[#4d7fd6]" },
          { text: "D:44.18", cls: "text-[#f3922b]" },
        ]}
        axis={["88.05", "47.20", "6.35"]}
      >
        <KdChart />
      </Indicator>
      <Indicator
        label="成交量"
        size="text-[36px]"
        height="h-[218px]"
        values={[
          { text: "5:1504.11万", cls: "text-[#4d7fd6]" },
          { text: "10:994.12万", cls: "text-[#f3922b]" },
          { text: "20:738.89万", cls: "text-[#d05c5f]" },
        ]}
        axis={["3963.96万", "1981.98万", "0"]}
      >
        <VolumeChart />
      </Indicator>
      <Indicator
        label="MACD"
        height="h-[221px]"
        values={[
          { text: "MACD(12,26,9):1.171", cls: "text-[#d54c4e]" },
          { text: "DIF:0.692", cls: "text-white" },
          { text: "DEA:0.106", cls: "text-[#ea9a2a]" },
        ]}
        axis={["2.700", "0.059", "−2.580"]}
      >
        <MacdChart />
      </Indicator>
      <Strategies />
      <div className="h-[15px] bg-[#0a0a0b]" />
      <DetailTabs />
      <BottomBar />
      <SystemNav />
    </div>
  );
}
